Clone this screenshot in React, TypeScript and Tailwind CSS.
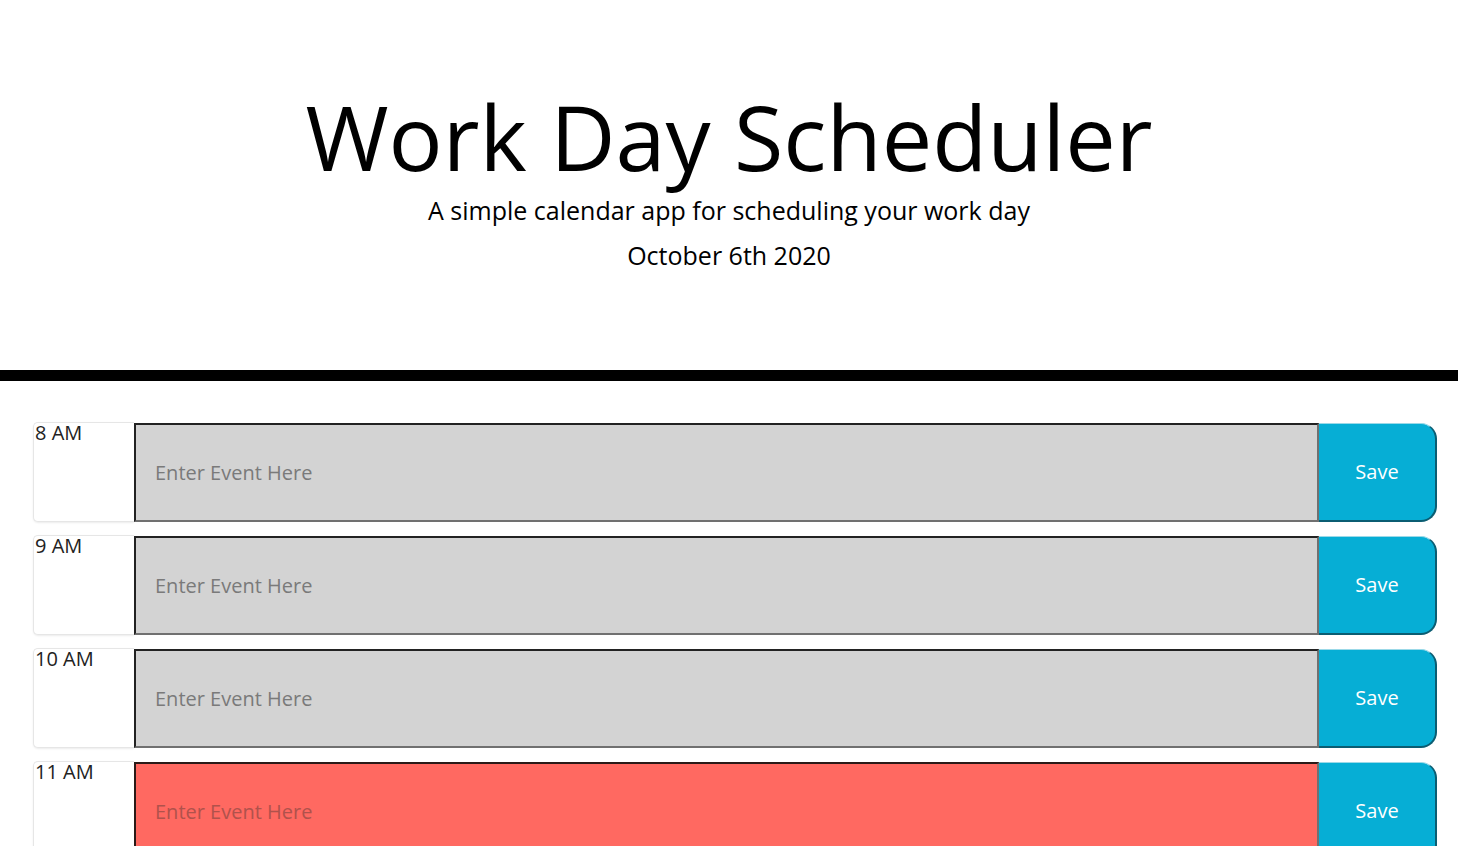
import React from 'react';

interface Hour {
  label: string;
  state: 'past' | 'present' | 'future';
}

const hours: Hour[] = [
  { label: '8 AM', state: 'past' },
  { label: '9 AM', state: 'past' },
  { label: '10 AM', state: 'past' },
  { label: '11 AM', state: 'present' },
  { label: '12 PM', state: 'future' },
];

const TimeBlock: React.FC<{ hour: Hour }> = ({ hour }) => {
  const areaColor =
    hour.state === 'present'
      ? 'bg-[#ff6961] border-t-[#2b1a18] border-l-[#2b1a18] placeholder:text-[#b0524c]'
      : hour.state === 'future'
      ? 'bg-[#77dd77] border-t-[#222] border-l-[#222] placeholder:text-[#777]'
      : 'bg-[#d3d3d3] border-t-[#222] border-l-[#222] placeholder:text-[#7a7a7a]';

  return (
    <div className="flex h-[100px] mb-[13px]">
      <div className="w-[101px] shrink-0 bg-white border-t border-b border-l border-[#e6e6e6] rounded-l-[5px] shadow-[0_1px_2px_rgba(0,0,0,0.08)] text-[20px] leading-[20px] text-[#222] pl-[1px]">
        {hour.label}
      </div>
      <textarea
        placeholder="Enter Event Here"
        className={`flex-1 resize-none mt-[1px] border-2 border-b-[#707070] border-r-[#707070] ${areaColor} text-[20px] leading-[24px] pl-[19px] pt-[36px] outline-none text-[#222]`}
      />
      <button className="w-[118px] shrink-0 mt-[1px] bg-[#06aed5] text-white text-[20px] rounded-r-[16px] border-r-2 border-b-2 border-[#0b5d72] border-t border-t-[#9bd9e8]">
        Save
      </button>
    </div>
  );
};

const App: React.FC = () => {
  return (
    <div className="bg-white font-['Open_Sans',sans-serif] overflow-hidden h-[846px]">
      <header className="h-[381px] border-b-[11px] border-black text-center pt-[86px]">
        <h1 className="text-[90px] leading-[100px] font-normal text-black">Work Day Scheduler</h1>
        <p className="text-[25px] leading-[36px] text-black mt-[6px]">A simple calendar app for scheduling your work day</p>
        <p className="text-[25px] leading-[36px] text-black mt-[9px]">October 6th 2020</p>
      </header>
      <main className="pl-[33px] pr-[21px] pt-[41px]">
        {hours.map((h) => (
          <TimeBlock key={h.label} hour={h} />
        ))}
      </main>
    </div>
  );
};

export default App;
